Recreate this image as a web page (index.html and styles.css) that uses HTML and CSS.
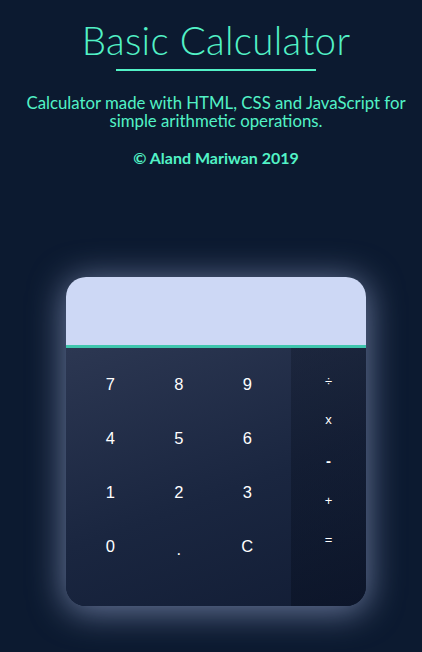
FILE: index.html
```html
<!DOCTYPE html>
<html>
<head>
<meta charset="utf-8">
<link rel="stylesheet" href="styles.css">
</head>
<body>
<header class="intro">
  <h1 class="title">Basic Calculator</h1>
  <div class="rule"></div>
  <p class="desc">Calculator made with HTML, CSS and JavaScript for simple arithmetic operations.</p>
  <p class="copy">© Aland Mariwan 2019</p>
</header>
<main class="calc">
  <div class="display"></div>
  <div class="keypad">
    <div class="nums">
      <span class="key">7</span><span class="key">8</span><span class="key">9</span>
      <span class="key">4</span><span class="key">5</span><span class="key">6</span>
      <span class="key">1</span><span class="key">2</span><span class="key">3</span>
      <span class="key">0</span><span class="key dot">.</span><span class="key">C</span>
    </div>
    <div class="ops">
      <span class="op">÷</span>
      <span class="op">x</span>
      <span class="op minus">-</span>
      <span class="op">+</span>
      <span class="op">=</span>
    </div>
  </div>
</main>
</body>
</html>
```
FILE: styles.css
```css
html, body {
  margin: 0;
  padding: 0;
}
body {
  background: #0c1a30;
  width: 422px;
  height: 652px;
  overflow: hidden;
  font-family: "Lato", "Open Sans", sans-serif;
  color: #4ff5c8;
}
.intro {
  display: flex;
  flex-direction: column;
  align-items: center;
  text-align: center;
  padding-top: 18px;
  padding-left: 10px;
}
.title {
  margin: 0;
  font-weight: 300;
  font-size: 38.5px;
  line-height: 44px;
  letter-spacing: 0.3px;
  color: #52f2c6;
}
.rule {
  width: 200px;
  height: 2px;
  background: #52f2c6;
  margin-top: 7px;
}
.desc {
  margin: 23px 0 0;
  font-size: 16.8px;
  line-height: 18px;
  width: 400px;
  color: #52f2c6;
}
.copy {
  margin: 19px 0 0;
  font-weight: 700;
  font-size: 16px;
  line-height: 18px;
  color: #52f2c6;
}
.calc {
  width: 300px;
  margin: 110px 0 0 66px;
  border-radius: 20px;
  overflow: hidden;
  box-shadow: 0 4px 34px 2px rgba(180, 195, 240, 0.55);
}
.display {
  height: 68px;
  background: #cdd8f5;
  border-bottom: 3px solid #3fc6ad;
}
.keypad {
  display: flex;
  height: 258px;
  background: linear-gradient(160deg, #2c3752 0%, #1a2640 55%, #121d35 100%);
  font-family: "Liberation Sans", Arial, sans-serif;
  color: #ffffff;
}
.nums {
  flex: 1;
  display: grid;
  grid-template-columns: repeat(3, 68.5px);
  grid-auto-rows: 54px;
  padding: 9px 0 0 10px;
}
.key {
  display: flex;
  align-items: center;
  justify-content: center;
  font-size: 16.5px;
}
.dot {
  padding-top: 6px;
}
.ops {
  width: 75px;
  display: flex;
  flex-direction: column;
  align-items: center;
  padding-top: 14px;
  background: linear-gradient(170deg, rgba(12, 20, 36, 0.35), rgba(5, 12, 28, 0.45));
}
.op {
  height: 39.5px;
  line-height: 39.5px;
  font-size: 13px;
  text-align: center;
  width: 100%;
}
.op:nth-child(2) {
  line-height: 36px;
}
.minus {
  font-weight: 700;
  font-size: 15px;
}
```
